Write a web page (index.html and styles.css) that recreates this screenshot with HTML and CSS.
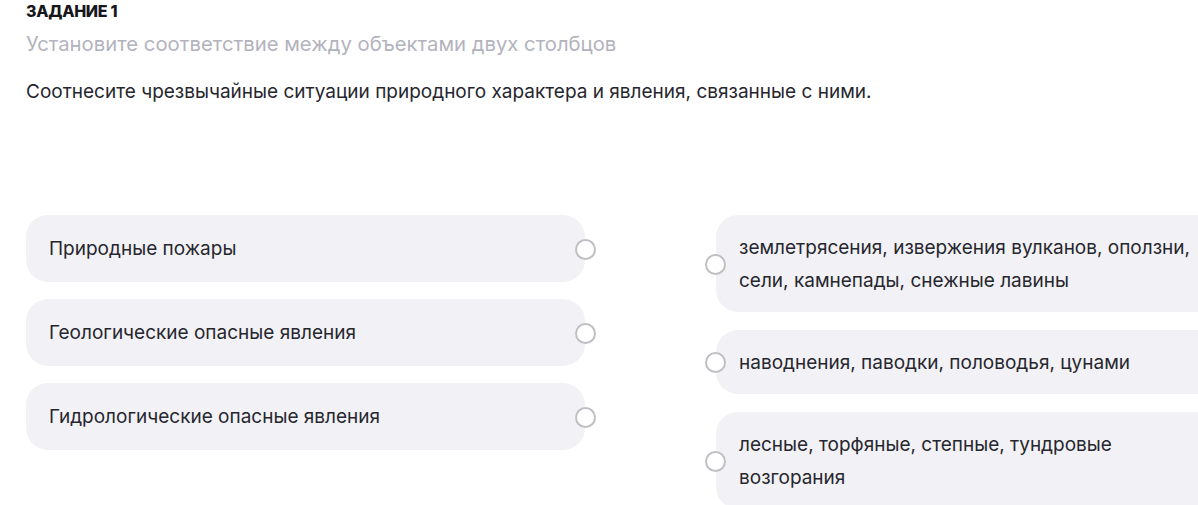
FILE: index.html
```html
<!DOCTYPE html>
<html lang="ru">
<head>
<meta charset="utf-8">
<title>Задание 1</title>
<link rel="stylesheet" href="styles.css">
</head>
<body>
<main class="task">
  <div class="task-label">ЗАДАНИЕ 1</div>
  <div class="task-hint">Установите соответствие между объектами двух столбцов</div>
  <p class="task-question">Соотнесите чрезвычайные ситуации природного характера и явления, связанные с ними.</p>
  <div class="match">
    <div class="col col-left">
      <div class="card card-left"><span class="card-text">Природные пожары</span><span class="dot"></span></div>
      <div class="card card-left"><span class="card-text">Геологические опасные явления</span><span class="dot"></span></div>
      <div class="card card-left"><span class="card-text">Гидрологические опасные явления</span><span class="dot"></span></div>
    </div>
    <div class="col col-right">
      <div class="card card-right"><span class="dot"></span><span class="card-text">землетрясения, извержения вулканов, оползни, сели, камнепады, снежные лавины</span></div>
      <div class="card card-right"><span class="dot"></span><span class="card-text">наводнения, паводки, половодья, цунами</span></div>
      <div class="card card-right"><span class="dot"></span><span class="card-text">лесные, торфяные, степные, тундровые возгорания</span></div>
    </div>
  </div>
</main>
</body>
</html>
```
FILE: styles.css
```css
html, body {
  margin: 0;
  padding: 0;
  background: #ffffff;
  overflow: hidden;
}
body {
  font-family: Inter, "Noto Sans", sans-serif;
  color: #2a2a33;
}
.task {
  padding: 1px 0 0 26px;
  width: 1300px;
}
.task-label {
  font-size: 16px;
  font-weight: 800;
  line-height: 20px;
  color: #16161c;
  letter-spacing: -0.3px;
}
.task-hint {
  margin-top: 10px;
  font-size: 20.3px;
  line-height: 26px;
  color: #b3b3bd;
}
.task-question {
  margin: 23px 0 0 0;
  font-size: 19px;
  line-height: 24px;
  color: #26262e;
}
.match {
  margin-top: 111px;
  display: flex;
  gap: 131px;
  align-items: flex-start;
}
.col {
  display: flex;
  flex-direction: column;
  width: 559px;
  flex: none;
}
.col-left {
  gap: 17px;
}
.col-right {
  gap: 18px;
}
.card {
  position: relative;
  background: #f2f2f6;
  border-radius: 22px;
  font-size: 19px;
  line-height: 33px;
  display: flex;
  align-items: center;
  color: #26262e;
}
.card-left {
  padding: 17px 40px 17px 23px;
}
.card-right {
  width: 700px;
  padding: 16px 20px 15px 23px;
}
.card-right .card-text {
  max-width: 458px;
}
.card-text {
  display: block;
}
.dot {
  position: absolute;
  top: 50%;
  width: 17px;
  height: 17px;
  margin-top: -10px;
  border: 2px solid #c0c0c4;
  border-radius: 50%;
  background: #ffffff;
}
.card-left .dot {
  right: -11px;
}
.card-right .dot {
  left: -11px;
}
```
